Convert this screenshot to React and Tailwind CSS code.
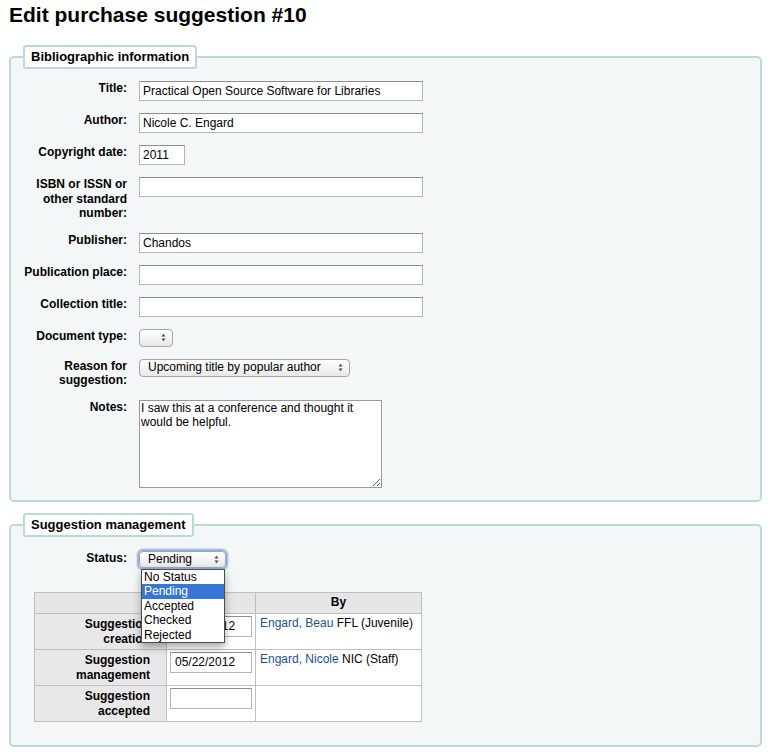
import React from "react";

const fields = [
  { label: "Title:", kind: "text", value: "Practical Open Source Software for Libraries", width: "w-[284px]" },
  { label: "Author:", kind: "text", value: "Nicole C. Engard", width: "w-[284px]" },
  { label: "Copyright date:", kind: "text", value: "2011", width: "w-[46px]" },
  { label: "ISBN or ISSN or other standard number:", kind: "text", value: "", width: "w-[284px]" },
  { label: "Publisher:", kind: "text", value: "Chandos", width: "w-[284px]" },
  { label: "Publication place:", kind: "text", value: "", width: "w-[284px]" },
  { label: "Collection title:", kind: "text", value: "", width: "w-[284px]" },
  { label: "Document type:", kind: "select", value: "", width: "w-[34px] h-[18px]" },
  { label: "Reason for suggestion:", kind: "select", value: "Upcoming title by popular author", width: "w-[211px] h-[18px]" },
  { label: "Notes:", kind: "textarea", value: "I saw this at a conference and thought it would be helpful." },
];

const statusOptions = ["No Status", "Pending", "Accepted", "Checked", "Rejected"];

const Arrows = () => (
  <svg width="5" height="9" viewBox="0 0 5 9" className="shrink-0">
    <path d="M0.5 3.5 L2.5 0.8 L4.5 3.5 Z" fill="#4a4a4a" />
    <path d="M0.5 5.5 L2.5 8.2 L4.5 5.5 Z" fill="#4a4a4a" />
  </svg>
);

const FakeSelect = ({ value, className = "" }) => (
  <div
    className={`flex items-center justify-between rounded-[4px] border border-[#a6a6a6] bg-linear-to-b from-white to-[#e8e8e8] pl-[8px] pr-[6px] text-[12px] leading-[15px] text-black ${className}`}
  >
    <span className="whitespace-nowrap">{value}</span>
    <Arrows />
  </div>
);

const TextInput = ({ value, className = "" }) => (
  <input
    type="text"
    readOnly
    value={value}
    className={`h-[20px] border border-[#b5b5b5] border-t-[#8e8e8e] bg-white px-[3px] text-[12px] leading-[15px] text-black outline-none ${className}`}
  />
);

const Legend = ({ children }) => (
  <legend className="rounded-[3px] border-2 border-[#b9d9da] bg-white px-[6px] text-[13px] font-bold leading-[20px] text-black">
    {children}
  </legend>
);

const FieldRow = ({ field }) => (
  <li className="flex gap-[12px]">
    <label className="w-[104px] shrink-0 text-right text-[12px] font-bold leading-[14.5px] text-black">
      {field.label}
    </label>
    {field.kind === "text" && <TextInput value={field.value} className={field.width} />}
    {field.kind === "select" && <FakeSelect value={field.value} className={field.width} />}
    {field.kind === "textarea" && (
      <textarea
        readOnly
        value={field.value}
        className="h-[88px] w-[243px] border border-[#9a9a9a] bg-white pl-[1px] pr-[20px] pt-0 text-[12px] leading-[14.5px] text-black outline-none"
      />
    )}
  </li>
);

const historyRows = [
  { label: ["Suggestion", "creation"], date: "05/22/2012", name: "Engard, Beau", rest: " FFL (Juvenile)" },
  { label: ["Suggestion", "management"], date: "05/22/2012", name: "Engard, Nicole", rest: " NIC (Staff)" },
  { label: ["Suggestion", "accepted"], date: "", name: "", rest: "" },
];

export default function App() {
  return (
    <div className="min-h-[754px] bg-white pl-[9px] pr-[6px] font-['Liberation_Sans',Arial,sans-serif] text-black">
      <h1 className="pt-[3px] text-[21px] font-bold leading-[24px]">Edit purchase suggestion #10</h1>

      {/* Bibliographic information */}
      <fieldset className="mt-[18px] rounded-[5px] border-2 border-[#b9d9da] bg-[#f3f7f8] pl-[12px] pb-[12px] pt-[12px]">
        <Legend>Bibliographic information</Legend>
        <ol className="flex flex-col gap-[12px]">
          {fields.map((f) => (
            <FieldRow key={f.label} field={f} />
          ))}
        </ol>
      </fieldset>

      {/* Suggestion management */}
      <fieldset className="mt-[11px] rounded-[5px] border-2 border-[#b9d9da] bg-[#f3f7f8] pl-[12px] pb-[23px] pt-[14px]">
        <Legend>Suggestion management</Legend>
        <div className="flex gap-[12px]">
          <label className="w-[104px] shrink-0 text-right text-[12px] font-bold leading-[14.5px]">Status:</label>
          <div className="relative">
            <FakeSelect
              value="Pending"
              className="h-[17px] w-[87px] border-[#6f95cc] shadow-[0_0_2px_2px_#86acdf]"
            />
            <ul className="absolute left-[2px] top-[18px] z-10 w-[84px] border border-[#4d4d4d] bg-white py-0 text-[12px] leading-[14.5px] shadow-[0_4px_8px_rgba(0,0,0,0.35)]">
              {statusOptions.map((o) => (
                <li
                  key={o}
                  className={o === "Pending" ? "bg-[#3875d7] pl-[2px] text-white" : "pl-[2px] text-black"}
                >
                  {o}
                </li>
              ))}
            </ul>
          </div>
        </div>

        <table className="ml-[11px] mt-[24px] w-[388px] border-collapse text-[12px] leading-[15px]">
          <thead>
            <tr className="h-[21px] bg-[#e6e6e6]">
              <th className="w-[132px] border border-[#bfbfbf]"></th>
              <th className="w-[89px] border border-[#bfbfbf] font-bold">Date</th>
              <th className="border border-[#bfbfbf] font-bold">By</th>
            </tr>
          </thead>
          <tbody>
            {historyRows.map((r) => (
              <tr key={r.label[1]} className="h-[36px]">
                <th className="border border-[#bfbfbf] bg-[#e8e8e8] pr-[16px] pt-[3px] text-right align-top font-bold">
                  {r.label[0]}
                  <br />
                  {r.label[1]}
                </th>
                <td className="border border-[#bfbfbf] bg-white pl-[3px] pt-[2px] align-top">
                  <TextInput value={r.date} className="h-[21px] w-[82px] pl-[4px]" />
                </td>
                <td className="border border-[#bfbfbf] bg-white pl-[4px] pt-[2px] align-top">
                  {r.name && <a className="text-[#1c4f95]">{r.name}</a>}
                  {r.rest}
                </td>
              </tr>
            ))}
          </tbody>
        </table>
      </fieldset>
    </div>
  );
}
